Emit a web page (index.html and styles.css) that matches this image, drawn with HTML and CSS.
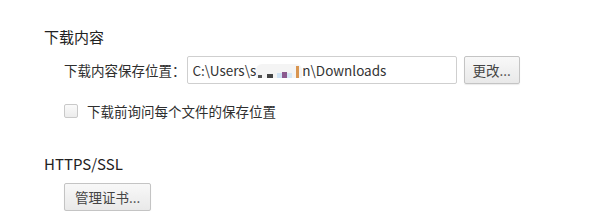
FILE: index.html
```html
<!DOCTYPE html>
<html lang="zh-CN">
<head>
    <meta charset="UTF-8">
    <title>设置 - 下载内容</title>
    <link rel="stylesheet" href="styles.css">
</head>
<body>
    <div class="settings">
        <section class="group">
            <h3 class="group-title">下载内容</h3>
            <div class="row">
                <label class="label" for="downloadPath">下载内容保存位置：</label>
                <div class="path-box" id="downloadPath">
                    C:\Users\s<span class="blur">
                        <i class="px dark"></i><i class="px grey"></i><i class="px blue"></i><i class="px purple"></i><i class="px light"></i><i class="px orange"></i>
                    </span>n\Downloads
                </div>
                <button class="btn">更改...</button>
            </div>
            <label class="check-row">
                <input type="checkbox" class="check">
                <span>下载前询问每个文件的保存位置</span>
            </label>
        </section>

        <section class="group">
            <h3 class="group-title">HTTPS/SSL</h3>
            <div class="row">
                <button class="btn btn-wide">管理证书...</button>
            </div>
        </section>
    </div>
</body>
</html>
```

FILE: styles.css
```css
body {
    margin: 0;
    background: #fff;
    color: #2e2e2e;
    font-family: "Noto Sans CJK SC", "Noto Sans", sans-serif;
    font-size: 13.5px;
}

.settings {
    padding: 27px 0 0 44px;
}

.group-title {
    margin: 0 0 9px 0;
    font-size: 15px;
    font-weight: normal;
    line-height: 20px;
    color: #222;
}

.group + .group {
    margin-top: 33px;
}

.row {
    display: flex;
    align-items: center;
    padding-left: 20px;
}

.label {
    margin-right: 1px;
}

.path-box {
    box-sizing: border-box;
    width: 270px;
    height: 28px;
    line-height: 26px;
    padding: 0 5px;
    border: 1px solid #cfcfcf;
    border-radius: 2px;
    white-space: nowrap;
    color: #333;
}

.blur {
    display: inline-flex;
    align-items: flex-end;
    height: 14px;
    padding: 0 2px;
    background: #f4f4f4;
    border-radius: 6px 6px 0 0;
    vertical-align: -2px;
}

.px {
    display: inline-block;
    width: 5px;
    height: 5px;
}

.px.dark { background: #555; width: 4px; height: 3px; margin-right: 5px; }
.px.grey { background: #444; width: 6px; height: 4px; margin-right: 4px; }
.px.blue { background: #cfe3f4; height: 5px; }
.px.purple { background: #8b5a8e; height: 6px; }
.px.light { background: #d6e8f5; margin-right: 4px; }
.px.orange { background: #d99550; width: 3px; height: 12px; margin-right: 1px; }

.btn {
    box-sizing: border-box;
    height: 28px;
    margin-left: 7px;
    padding: 0 8px;
    border: 1px solid #c4c4c4;
    border-radius: 2px;
    background: linear-gradient(#f8f8f8, #e9e9e9);
    box-shadow: 0 1px 1px rgba(0, 0, 0, 0.08);
    color: #444;
    font-family: inherit;
    font-size: 13.5px;
}

.btn-wide {
    margin-left: 0;
    padding: 0 10px;
}

.check-row {
    display: flex;
    align-items: center;
    margin: 17px 0 0 20px;
}

.check {
    appearance: none;
    width: 14px;
    height: 14px;
    margin: 0 9px 0 0;
    border: 1px solid #c9c9c9;
    border-radius: 2px;
    background: linear-gradient(#fafafa, #ececec);
}
```
